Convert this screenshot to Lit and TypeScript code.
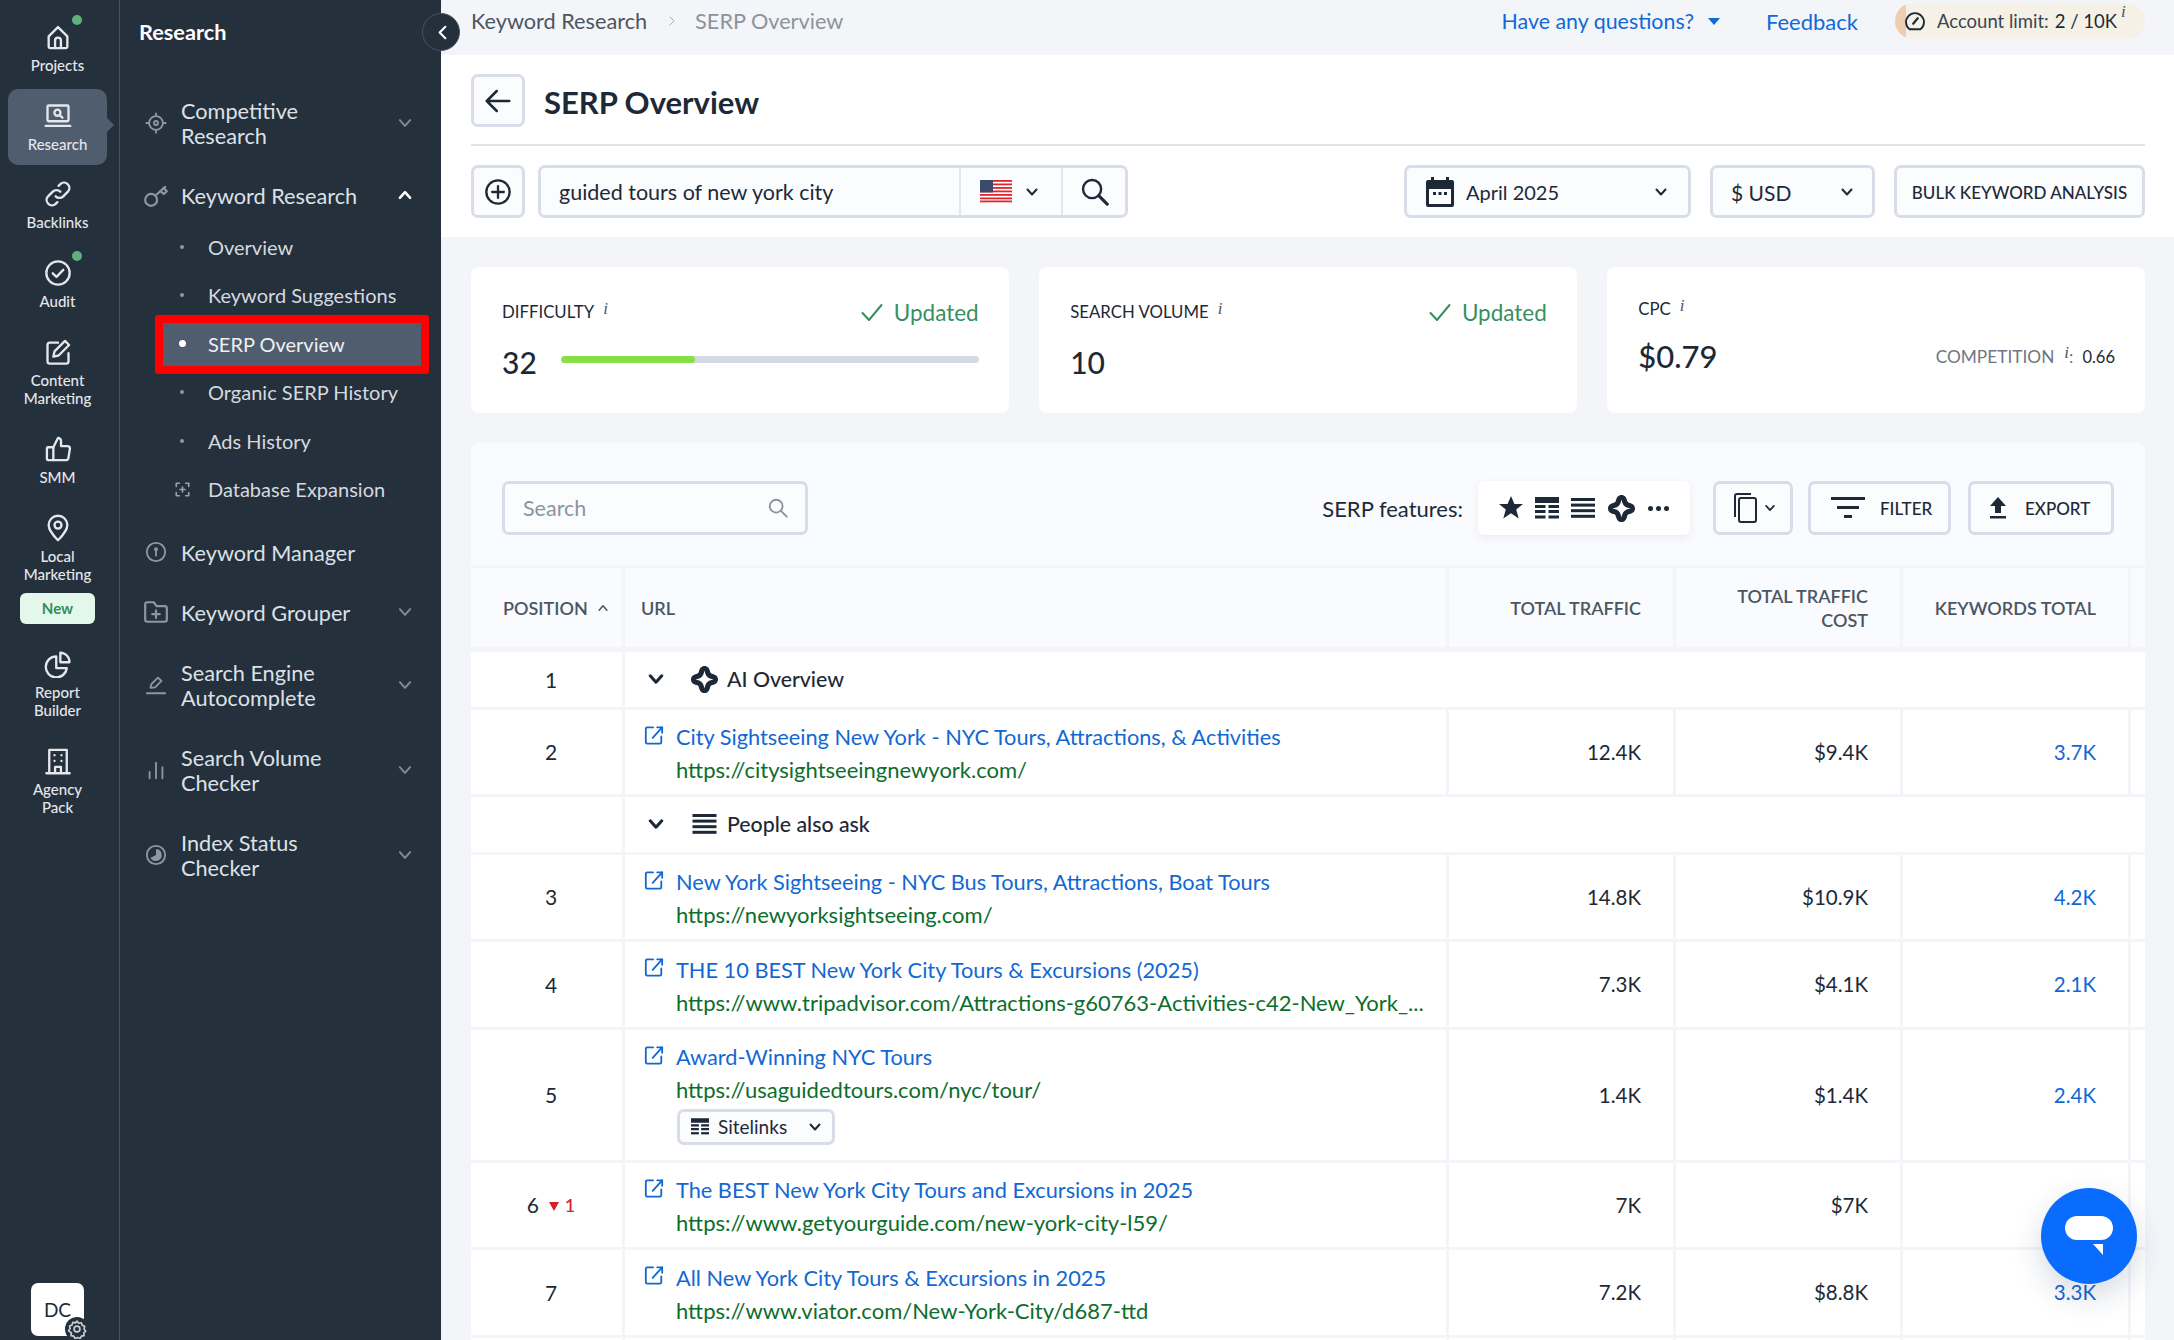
import { LitElement, html, css, svg } from "lit";
import { customElement } from "lit/decorators.js";

const ic = (w: number, h: number, body: unknown, vb = "0 0 24 24", cls = "") =>
  html`<svg class=${cls} width=${w} height=${h} viewBox=${vb} fill="none" stroke="currentColor" stroke-width="2" stroke-linecap="round" stroke-linejoin="round">${body}</svg>`;

const chevD = (w = 14, h = 14, sw = 2.4) =>
  html`<svg width=${w} height=${h} viewBox="0 0 14 14" fill="none" stroke="currentColor" stroke-width=${sw} stroke-linecap="round" stroke-linejoin="round"><path d="M2.5 4.5 7 9.5l4.5-5"/></svg>`;
const chevU = (w = 14, h = 14, sw = 2.4) =>
  html`<svg width=${w} height=${h} viewBox="0 0 14 14" fill="none" stroke="currentColor" stroke-width=${sw} stroke-linecap="round" stroke-linejoin="round"><path d="M2.5 9.5 7 4.5l4.5 5"/></svg>`;

const aiIcon = (s = 29) =>
  html`<svg width=${s} height=${s} viewBox="0 0 24 24"><path fill="#1d2936" d="M12 .8C14.6 .8 16 2.800 16.600 5.200 17 6.800 17.200 7 18.800 7.400 21.200 8 23.200 9.400 23.200 12 23.200 14.600 21.200 16 18.800 16.600 17.200 17 17 17.200 16.600 18.800 16 21.200 14.600 23.200 12 23.200 9.400 23.200 8 21.200 7.400 18.800 7 17.200 6.800 17 5.200 16.600 2.800 16 .8 14.600 .8 12 .8 9.400 2.800 8 5.200 7.400 6.800 7 7 6.800 7.400 5.200 8 2.800 9.400 .8 12 .8Z"/><path fill="#fff" d="M12 4.500C13 9.500 14.500 11 19.500 12 14.500 13 13 14.500 12 19.500 11 14.500 9.500 13 4.500 12 9.500 11 11 9.500 12 4.500Z"/></svg>`;
const linesIcon = (w = 25, h = 20) =>
  html`<svg width=${w} height=${h} viewBox="0 0 24 20" fill="#1d2936"><rect y="0" width="24" height="3"/><rect y="5.6" width="24" height="3"/><rect y="11.2" width="24" height="3"/><rect y="16.8" width="24" height="3"/></svg>`;
const siteIcon = (w = 24, h = 22) =>
  html`<svg width=${w} height=${h} viewBox="0 0 24 22" fill="#1d2936"><rect width="24" height="6"/><rect y="8" width="10.5" height="3"/><rect x="13.5" y="8" width="10.5" height="3"/><rect y="13" width="10.5" height="3"/><rect x="13.5" y="13" width="10.5" height="3"/><rect y="18.5" width="10.5" height="3"/><rect x="13.5" y="18.5" width="10.5" height="3"/></svg>`;
const extIcon = () =>
  ic(20, 23, svg`<path d="M10 3H3.5A1.5 1.5 0 0 0 2 4.5v15A1.5 1.5 0 0 0 3.5 21h14a1.5 1.5 0 0 0 1.5-1.5V13"/><path d="M9.5 14.5 20 3"/><path d="M14.5 3H20v6"/>`, "0 0 22 24", "ext");
const checkIcon = () =>
  ic(22, 19, svg`<path d="M1.5 10 8 17 20.5 2"/>`, "0 0 22 19");

const railIcons: Record<string, unknown> = {
  home: svg`<path d="M4 11.5 12 3.5l8 8V20a1.5 1.5 0 0 1-1.5 1.5h-13A1.5 1.5 0 0 1 4 20z"/><path d="M9.5 21.5V15a2.5 2.5 0 0 1 5 0v6.5"/>`,
  laptop: svg`<rect x="3" y="3" width="18" height="13.5" rx="1"/><circle cx="11.5" cy="9.2" r="2.6"/><path d="m13.5 11.2 2.3 2.3"/><path d="M1.5 20.5h21"/>`,
  link: svg`<path d="M10 14a4.5 4.5 0 0 0 6.5 0l4-4A4.6 4.6 0 0 0 14 3.5l-1.5 1.5"/><path d="M14 10a4.5 4.5 0 0 0-6.5 0l-4 4A4.6 4.6 0 0 0 10 20.5l1.5-1.5"/>`,
  check: svg`<circle cx="12" cy="12" r="10"/><path d="m7.5 12.3 3.2 3 5.8-6"/>`,
  edit: svg`<path d="M12 4H5a2 2 0 0 0-2 2v14a2 2 0 0 0 2 2h14a2 2 0 0 0 2-2v-7"/><path d="m8 16 1-4.5L18 2.5l3.5 3.5-9 9z"/>`,
  thumb: svg`<path d="M8 10.5 12 2.5a2.6 2.6 0 0 1 2.6 2.6V9.5h5.6a2 2 0 0 1 2 2.3l-1.3 8a2 2 0 0 1-2 1.7H8z"/><path d="M8 10.5H3.5a1 1 0 0 0-1 1v9a1 1 0 0 0 1 1H8"/>`,
  pin: svg`<path d="M12 22.5S4 14.8 4 9.5a8 8 0 0 1 16 0c0 5.3-8 13-8 13z"/><circle cx="12" cy="9.5" r="3"/>`,
  pie: svg`<path d="M10.5 5.5a9 9 0 1 0 9 10h-9z"/><path d="M14 2.2a8 8 0 0 1 7.8 8.3H14z"/>`,
  building: svg`<path d="M4.5 22V2.5h15V22"/><path d="M2 22.5h20"/><path d="M9.5 22v-5h5v5"/><path d="M9 7h.01M15 7h.01M9 12h.01M15 12h.01"/>`,
};

const panelIcons: Record<string, unknown> = {
  target: svg`<circle cx="12" cy="12" r="7.5"/><circle cx="12" cy="12" r="2.2"/><path d="M12 1.5v3M12 19.5v3M1.5 12h3M19.5 12h3"/>`,
  key: svg`<circle cx="7.5" cy="16.5" r="5.5"/><path d="m11.5 12.5 9-8"/><path d="m16 8.5 3.2 2.6 2.8-2.6L19 5.5"/>`,
  manager: svg`<circle cx="12" cy="12" r="10"/><circle cx="12" cy="9" r="1.2"/><path d="M12 10v6"/>`,
  folder: svg`<path d="M2 5a2 2 0 0 1 2-2h6l2.5 3.5H20a2 2 0 0 1 2 2V19a2 2 0 0 1-2 2H4a2 2 0 0 1-2-2z"/><path d="M12 10.5v7M8.5 14h7"/>`,
  pen: svg`<path d="m6 15 1-4 7-7 4 3.6-7 7z"/><path d="M2 21h20"/>`,
  bars: svg`<path d="M5 21v-7M12 21V4M19 21V9"/>`,
  clock: svg`<circle cx="12" cy="12" r="10"/><path d="M12 5.5a6.5 6.5 0 1 1-6 9.5l6-3z" fill="currentColor" stroke="none"/>`,
};

const railItems = [
  { icon: "home", label: ["Projects"], dot: true },
  { icon: "laptop", label: ["Research"], active: true },
  { icon: "link", label: ["Backlinks"] },
  { icon: "check", label: ["Audit"], dot: true, extra: true },
  { icon: "edit", label: ["Content", "Marketing"] },
  { icon: "thumb", label: ["SMM"] },
  { icon: "pin", label: ["Local", "Marketing"], badge: "New" },
  { icon: "pie", label: ["Report", "Builder"] },
  { icon: "building", label: ["Agency", "Pack"] },
];

const rows = [
  { kind: "group", pos: "1", icon: "ai", label: "AI Overview" },
  { kind: "link", pos: "2", title: "City Sightseeing New York - NYC Tours, Attractions, & Activities", url: "https://citysightseeingnewyork.com/", t: "12.4K", c: "$9.4K", k: "3.7K" },
  { kind: "group", pos: "", icon: "lines", label: "People also ask" },
  { kind: "link", pos: "3", title: "New York Sightseeing - NYC Bus Tours, Attractions, Boat Tours", url: "https://newyorksightseeing.com/", t: "14.8K", c: "$10.9K", k: "4.2K" },
  { kind: "link", pos: "4", title: "THE 10 BEST New York City Tours & Excursions (2025)", url: "https://www.tripadvisor.com/Attractions-g60763-Activities-c42-New_York_...", t: "7.3K", c: "$4.1K", k: "2.1K" },
  { kind: "link", pos: "5", title: "Award-Winning NYC Tours", url: "https://usaguidedtours.com/nyc/tour/", t: "1.4K", c: "$1.4K", k: "2.4K", sitelinks: true },
  { kind: "link", pos: "6", delta: "1", title: "The BEST New York City Tours and Excursions in 2025", url: "https://www.getyourguide.com/new-york-city-l59/", t: "7K", c: "$7K", k: "" },
  { kind: "link", pos: "7", title: "All New York City Tours & Excursions in 2025", url: "https://www.viator.com/New-York-City/d687-ttd", t: "7.2K", c: "$8.8K", k: "3.3K" },
];

@customElement("app-root")
export class AppRoot extends LitElement {
  static styles = css`
    :host { display: block; width: 2174px; height: 1340px; overflow: hidden; position: relative;
      font-family: "Lato", "Noto Sans", sans-serif; color: #1d2936; background: #f4f5f9; }
    * { box-sizing: border-box; }
    .app { display: flex; height: 1340px; }
    .rail { width: 120px; flex: none; background: #25303d; border-right: 1px solid #47525f; padding: 10px 8px 4px 8px; display: flex; flex-direction: column; gap: 2.5px; color: #e4e7eb; }
    .ri { position: relative; width: 99px; height: 76px; padding-top: 13px; border-radius: 10px; display: flex; flex-direction: column; align-items: center; font-size: 15px; line-height: 18px; font-weight: 500; flex: none; }
    .ri.extra { height: 77px; }
    .ri.tall { height: 94.5px; }
    .ri.badged { height: 134px; }
    .ri svg { display: block; margin-bottom: 5px; flex: none; }
    .ri.on { background: #4f5d6e; }
    .ri.on::after { content: ""; position: absolute; right: -7px; top: 29px; width: 0; height: 0; border-left: 7px solid #4f5d6e; border-top: 7px solid transparent; border-bottom: 7px solid transparent; }
    .rdot { position: absolute; left: 64px; top: 5px; width: 10px; height: 10px; border-radius: 50%; background: #5fb17c; }
    .rl { text-align: center; white-space: nowrap; }
    .rbadge { margin-top: 10px; width: 75px; height: 31px; border-radius: 6px; background: #e3f8eb; color: #2f8f5b; font-size: 15px; font-weight: 700; display: flex; align-items: center; justify-content: center; }
    .dc { margin: auto 0 0 23px; width: 53px; height: 53px; background: #fff; border-radius: 7px; color: #1d2936; font-size: 19px; display: flex; align-items: center; justify-content: center; position: relative; }
    .gear { position: absolute; right: -5px; bottom: -5px; width: 24px; height: 24px; border-radius: 50%; background: #25303d; color: #c9ced5; display: flex; align-items: center; justify-content: center; }

    .panel { width: 321px; flex: none; background: #25303d; position: relative; color: #dde1e6; padding: 20px 29px 0 21px; font-size: 21.7px; }
    .ptitle { font-size: 21.7px; line-height: 24px; font-weight: 700; color: #fff; margin: 0 0 37px -2px; }
    .collapse { position: absolute; right: -19px; top: 13px; width: 38px; height: 38px; border-radius: 50%; background: #25303d; border: 1px solid #46525f; color: #fff; display: flex; align-items: center; justify-content: center; z-index: 2; padding: 0 0 0 2px; }
    .pi { display: flex; align-items: center; height: 60px; line-height: 24.2px; }
    .pi.two { height: 85px; }
    .pi .pic { width: 30px; height: 30px; flex: none; color: #8d96a2; display: flex; align-items: center; justify-content: center; margin-right: 10px; margin-top: -2px; }
    .pi .pch { margin-left: auto; width: 16px; color: #7f8996; display: flex; align-items: center; justify-content: center; position: relative; left: 1px; top: -1px; }
    .pi .pch.up { color: #fff; }
    .subs { margin: -1px -9px 0 22px; padding-bottom: 7px; }
    .si { height: 43px; margin-bottom: 5.5px; display: flex; align-items: center; position: relative; font-size: 20px; color: #d5d9df; }
    .si .m { width: 38px; margin-right: 7px; flex: none; display: flex; justify-content: center; align-items: center; color: #9aa2ad; }
    .si .d { width: 4px; height: 4px; border-radius: 50%; background: #8e97a2; }
    .si.on { background: #4f5d6e; color: #eef0f3; top: 1px; padding-bottom: 2px; }
    .si.on .d { width: 7px; height: 7px; background: #fff; }
    .si.on::after { content: ""; position: absolute; inset: -8px; border: 8px solid #f00; border-radius: 3px; }

    .main { flex: 1; min-width: 0; }
    .top { height: 55px; display: flex; align-items: center; padding: 0 29px 13px 30px; font-size: 21.7px; }
    .crumb { color: #4b5663; }
    .sep { margin: 0 17px 0 19px; color: #a4acb7; display: flex; }
    .crumb2 { color: #8a94a0; }
    .tright { margin-left: auto; display: flex; align-items: center; color: #0f6ad6; font-size: 21.4px; }
    .tri { width: 0; height: 0; border-left: 6px solid transparent; border-right: 6px solid transparent; border-top: 7px solid #0f6ad6; margin: 0 46px 0 14px; }
    .fb { font-size: 22px; }
    .limit { margin-left: 37px; width: 250px; height: 36px; border-radius: 18px; background: linear-gradient(90deg, #efcdb0 0 11px, #f5f1e6 11px); display: flex; align-items: center; padding-left: 9px; font-size: 18.5px; color: #1d2936; }
    .limit svg { margin: 0 11px 0 0; }
    .limit .g { color: #3a4552; margin-right: 6px; }
    .i { font-family: "Liberation Serif", serif; font-style: italic; color: #4b5663; font-weight: 400; }
    .limit .i { font-size: 17px; margin-left: 4px; position: relative; top: -9px; }

    .white { background: #fff; height: 182px; padding: 19px 29px 0 30px; }
    .trow { display: flex; align-items: center; height: 53px; }
    .box { border: 3px solid #d8dde9; border-radius: 7px; background: #fbfcfe; display: flex; align-items: center; flex: none; }
    .sq { width: 54px; height: 53px; justify-content: center; color: #1d2936; }
    h1 { margin: 0 0 0 19px; padding-top: 3px; font-size: 31px; font-weight: 700; color: #1d2936; line-height: 53px; }
    .div { height: 2px; background: #e0e3ec; margin: 17px 0 19px; }
    .qbox { margin-left: 13px; width: 590px; height: 53px; }
    .qtext { width: 418px; padding-left: 18px; font-size: 21.5px; height: 100%; display: flex; align-items: center; padding-top: 1px; }
    .qflag { width: 102px; height: 100%; border-left: 2px solid #e3e6ef; display: flex; align-items: center; padding-left: 19px; gap: 13px; }
    .qs { flex: 1; height: 100%; border-left: 2px solid #e3e6ef; display: flex; align-items: center; justify-content: center; }
    .dd { height: 53px; padding: 0 18px; font-size: 21px; }
    .dd.a { margin-left: auto; width: 287px; padding: 1px 8px 0 19px; font-size: 20px; }
    .dd.a svg:first-child { margin-right: 12px; }
    .dd.u { margin-left: 19px; width: 165px; padding-top: 1px; }
    .dd .ch { margin-left: auto; display: flex; }
    .dd.b { margin-left: 19px; width: 251px; justify-content: center; padding: 1px 0 0; font-size: 17px; font-weight: 500; }

    .cards { display: grid; grid-template-columns: repeat(3, 1fr); gap: 30.5px; margin: 30px 29px 30px 30px; }
    .card { background: #fff; border-radius: 8px; height: 146px; padding: 29px 30px 0 31px; position: relative; }
    .ch1 { display: flex; align-items: center; height: 32px; justify-content: space-between; }
    .ch1.c { margin-top: -3px; }
    .lbl { font-size: 16.8px; font-weight: 400; color: #1d2936; }
    .lbl .i, .cmp .i { font-size: 17px; margin-left: 9px; position: relative; top: -4px; }
    .upd { color: #37905f; font-size: 22.5px; display: flex; align-items: center; gap: 11px; }
    .ch2 { display: flex; align-items: center; margin-top: 14px; height: 40px; font-size: 30px; font-weight: 500; }
    .bar { flex: 1; height: 7px; background: #d5d9e6; border-radius: 4px; margin-left: 24px; margin-top: -6px; overflow: hidden; }
    .bar div { height: 100%; width: 32%; background: #85e045; border-radius: 4px; }
    .ch3 { display: flex; align-items: center; height: 40px; font-size: 31px; font-weight: 500; margin-top: 10.5px; }
    .cmp { margin-left: auto; font-size: 17.3px; font-weight: 400; color: #6d7783; display: flex; align-items: center; position: relative; top: 1px; }
    .cmp .i { margin-left: 10px; }
    .cmp b { font-weight: 400; color: #1d2936; font-size: 16.5px; margin-left: 9px; }

    .tbl { margin: 0 29px 0 30px; display: flex; flex-direction: column; gap: 3px; }
    .bar0 { background: #fafbfe; border-radius: 8px 8px 0 0; height: 122px; padding: 38px 31px 0 31px; display: flex; align-items: flex-start; }
    .sbox { width: 306px; height: 54px; padding: 0 16px 0 18px; color: #8a94a0; font-size: 21.5px; justify-content: space-between; }
    .feat { margin-left: auto; height: 54px; display: flex; align-items: center; font-size: 22px; }
    .pill { margin-left: 15px; width: 212px; height: 54px; background: #fff; border-radius: 7px; box-shadow: 0 3px 8px rgba(40,50,80,.07); display: flex; align-items: center; padding-left: 21px; }
    .pill > * { flex: none; }
    .pill .p { margin-right: 12px; display: flex; }
    .pill .ai { display: flex; }
    .dots { display: flex; gap: 3px; margin-left: 12px; }
    .dots i { width: 5px; height: 5px; border-radius: 50%; background: #1d2936; }
    .t { height: 54px; font-size: 17px; font-weight: 500; }
    .t.dev { margin-left: 23px; width: 80px; padding-left: 16px; gap: 6px; }
    .t.fil { margin-left: 15px; width: 143px; padding-left: 20px; gap: 15px; }
    .t.exp { margin-left: 17px; width: 146px; padding-left: 18px; gap: 18px; }

    .tr { display: grid; grid-template-columns: 151px 821px 224px 224px 225px 14px; gap: 3px; }
    .tr > div { background: #fff; display: flex; align-items: center; }
    .thd { height: 79px; margin-bottom: 2px; }
    .thd > div { background: #fafbfe !important; font-size: 18px; font-weight: 600; color: #4b5663; }
    .thd .r { justify-content: flex-end; text-align: right; padding-right: 32px; line-height: 24px; }
    .thd .c1 { padding-left: 32px; gap: 9px; }
    .thd .c2 { padding-left: 16px; }
    .group { height: 54.5px; }
    .group .span { grid-column: 2 / -1; padding-left: 22px; font-size: 21.3px; font-weight: 500; }
    .group .mk { display: flex; color: #1d2936; margin-right: 25px; }
    .group .lb { margin-left: 8px; }
    .group .icb { width: 29px; display: flex; justify-content: center; }
    .tr .pos { justify-content: center; padding-left: 9px; font-size: 21px; }
    .delta { color: #d4202b; font-size: 18px; display: flex; align-items: center; margin-left: 10px; gap: 6px; font-weight: 500; }
    .delta i { width: 0; height: 0; border-left: 5px solid transparent; border-right: 5px solid transparent; border-top: 9px solid #d4202b; position: relative; top: 2px; }
    .link { height: 84.5px; }
    .link.tall { height: 130px; }
    .urlc { flex-direction: column; align-items: flex-start !important; padding: 11px 20px 0 20px; position: relative; min-width: 0; }
    .urlc .a { color: #1268d3; font-size: 21.75px; line-height: 34px; margin-left: 31px; white-space: nowrap; margin-top: -0.5px; }
    .urlc .g { color: #0c6d2c; font-size: 22px; line-height: 34px; margin: -1px 0 1.5px 31px; white-space: nowrap; }
    .ext { position: absolute; left: 19px; top: 14px; color: #1268d3; }
    .sl { margin-left: 32px; width: 158px; height: 36px; font-size: 19px; padding-left: 11px; border-radius: 7px; gap: 9px; }
    .sl .ch { margin-left: 12px; display: flex; }
    .num { justify-content: flex-end; padding-right: 32px; font-size: 20.5px; }
    .num.k { color: #1268d3; }
    .last { height: 10px; }

    .chat { position: absolute; left: 2041px; top: 1188px; width: 96px; height: 96px; border-radius: 50%; background: #0a6cff; box-shadow: 0 12px 30px rgba(30,50,90,.18); z-index: 5; display: flex; align-items: center; justify-content: center; }
  `;

  renderRail() {
    return html`<nav class="rail">
      ${railItems.map((r: any) => html`<div class="ri ${r.active ? "on" : ""} ${r.extra ? "extra" : ""} ${r.label.length > 1 ? "tall" : ""} ${r.badge ? "badged" : ""}">
        ${ic(28, 28, railIcons[r.icon])}
        ${r.dot ? html`<span class="rdot"></span>` : ""}
        <div class="rl">${r.label.map((l: string) => html`<div>${l}</div>`)}</div>
        ${r.badge ? html`<div class="rbadge">${r.badge}</div>` : ""}
      </div>`)}
      <div class="dc">DC<span class="gear">${ic(20, 20, svg`<circle cx="12" cy="12" r="3.5"/><path d="M12 2.5l2 2.6 3.2-.6 1 3.1 3 1.2-.8 3.2 2 2.5-2.3 2.3.4 3.2-3.2.6-1.6 2.8-3-1.2-3 1.2-1.6-2.8-3.2-.6.4-3.2L1.800 14l2-2.500-.8-3.200 3-1.200 1-3.100 3.200.6z"/>`)}</span></div>
    </nav>`;
  }

  renderItem(icon: string, lines: string[], chev: "" | "d" | "u" = "d") {
    const big = icon === "key" || icon === "folder";
    return html`<div class="pi ${lines.length > 1 ? "two" : ""}">
      <span class="pic">${ic(big ? 26 : 22, big ? 26 : 22, panelIcons[icon])}</span>
      <div>${lines.map((l) => html`<div>${l}</div>`)}</div>
      ${chev ? html`<span class="pch ${chev === "u" ? "up" : ""}">${chev === "u" ? chevU(16, 16, 2.2) : chevD(16, 16, 1.8)}</span>` : ""}
    </div>`;
  }

  renderPanel() {
    const subs = ["Overview", "Keyword Suggestions", "SERP Overview", "Organic SERP History", "Ads History"];
    return html`<aside class="panel">
      <div class="ptitle">Research</div>
      <button class="collapse" aria-label="collapse">${ic(17, 17, svg`<path d="M16 4 8 12l8 8" stroke-width="3"/>`, "0 0 24 24")}</button>
      ${this.renderItem("target", ["Competitive", "Research"])}
      ${this.renderItem("key", ["Keyword Research"], "u")}
      <div class="subs">
        ${subs.map((s) => html`<div class="si ${s === "SERP Overview" ? "on" : ""}"><span class="m"><span class="d"></span></span>${s}</div>`)}
        <div class="si"><span class="m">${ic(15, 15, svg`<path d="M2 7V2h5M17 2h5v5M22 17v5h-5M7 22H2v-5M12 8v8M8 12h8" stroke-width="2.600"/>`)}</span>Database Expansion</div>
      </div>
      ${this.renderItem("manager", ["Keyword Manager"], "")}
      ${this.renderItem("folder", ["Keyword Grouper"])}
      ${this.renderItem("pen", ["Search Engine", "Autocomplete"])}
      ${this.renderItem("bars", ["Search Volume", "Checker"])}
      ${this.renderItem("clock", ["Index Status", "Checker"])}
    </aside>`;
  }

  renderTop() {
    return html`<header class="top">
      <span class="crumb">Keyword Research</span>
      <span class="sep">${ic(12, 14, svg`<path d="m8 4 8 8-8 8"/>`)}</span>
      <span class="crumb2">SERP Overview</span>
      <div class="tright">
        <span>Have any questions?</span><span class="tri"></span><span class="fb">Feedback</span>
        <div class="limit">
          ${ic(22, 22, svg`<path d="M6 21a9.800 9.800 0 1 1 12 0z"/><path d="m10 15 5-6" stroke-width="2.400"/>`)}
          <span class="g">Account limit:</span><span>2 / 10K</span><span class="i">i</span>
        </div>
      </div>
    </header>`;
  }

  renderWhite() {
    return html`<section class="white">
      <div class="trow">
        <div class="box sq">${ic(30, 30, svg`<path d="M21 12H4M11 4l-8 8 8 8"/>`)}</div>
        <h1>SERP Overview</h1>
      </div>
      <div class="div"></div>
      <div class="trow">
        <div class="box sq">${ic(28, 28, svg`<circle cx="12" cy="12" r="10"/><path d="M12 7v10M7 12h10"/>`)}</div>
        <div class="box qbox">
          <div class="qtext">guided tours of new york city</div>
          <div class="qflag">
            <svg width="32" height="23" viewBox="0 0 32 23">
              <rect width="32" height="23" fill="#fff"/>
              ${[0, 3.5, 7, 10.5, 14, 17.5, 20.5].map((y) => svg`<rect y=${y} width="32" height="1.800" fill="#e0252f"/>`)}
              <rect width="13" height="12.500" fill="#3c4a6b"/>
            </svg>
            ${chevD(14, 14, 2)}
          </div>
          <div class="qs">${ic(29, 29, svg`<circle cx="10" cy="10" r="7.500"/><path d="m15.500 15.500 7 7" stroke-width="2.600"/>`)}</div>
        </div>
        <div class="box dd a">
          <svg width="28" height="30" viewBox="0 0 28 30" fill="#1d2936"><path d="M5 0h3v3h12V0h3v3h3a2 2 0 0 1 2 2v23a2 2 0 0 1-2 2H2a2 2 0 0 1-2-2V5a2 2 0 0 1 2-2h3zM3 12v15h22V12z"/><rect x="7" y="15" width="3" height="3"/><rect x="12.500" y="15" width="3" height="3"/><rect x="18" y="15" width="3" height="3"/></svg>
          April 2025<span class="ch">${chevD(14, 14, 2)}</span>
        </div>
        <div class="box dd u">$ USD<span class="ch">${chevD(14, 14, 2)}</span></div>
        <div class="box dd b">BULK KEYWORD ANALYSIS</div>
      </div>
    </section>`;
  }

  renderCards() {
    const hd = (l: string) => html`<div class="ch1"><span class="lbl">${l}<span class="i">i</span></span><span class="upd">${checkIcon()}Updated</span></div>`;
    return html`<section class="cards">
      <div class="card">${hd("DIFFICULTY")}<div class="ch2">32<div class="bar"><div></div></div></div></div>
      <div class="card">${hd("SEARCH VOLUME")}<div class="ch2">10</div></div>
      <div class="card">
        <div class="ch1 c"><span class="lbl">CPC<span class="i">i</span></span></div>
        <div class="ch3">$0.79<span class="cmp">COMPETITION<span class="i">i</span>:<b>0.66</b></span></div>
      </div>
    </section>`;
  }

  renderRow(r: any) {
    if (r.kind === "group") {
      return html`<div class="tr group">
        <div class="pos">${r.pos}</div>
        <div class="span"><span class="mk">${chevD(18, 18, 2.4)}</span><span class="icb">${r.icon === "ai" ? aiIcon(29) : linesIcon(25, 20)}</span><span class="lb">${r.label}</span></div>
      </div>`;
    }
    return html`<div class="tr link ${r.sitelinks ? "tall" : ""}">
      <div class="pos">${r.pos}${r.delta ? html`<span class="delta"><i></i>${r.delta}</span>` : ""}</div>
      <div class="urlc">
        ${extIcon()}
        <span class="a">${r.title}</span>
        <span class="g">${r.url}</span>
        ${r.sitelinks ? html`<div class="box sl">${siteIcon(18, 17)}Sitelinks<span class="ch">${chevD(14, 14, 2)}</span></div>` : ""}
      </div>
      <div class="num">${r.t}</div>
      <div class="num">${r.c}</div>
      <div class="num k">${r.k}</div>
      <div></div>
    </div>`;
  }

  renderTable() {
    return html`<section class="tbl">
      <div class="bar0">
        <div class="box sbox">Search ${ic(22, 22, svg`<circle cx="10" cy="10" r="7"/><path d="m15.500 15.500 6 6"/>`, "0 0 24 24")}</div>
        <div class="feat">SERP features:
          <div class="pill">
            <svg class="p" width="24" height="24" viewBox="0 0 24 24" fill="#1d2936"><path d="M12 0l3.400 8h8.600l-6.800 5.400 2.500 9.100L12 17.300 4.300 22.500l2.500-9.100L0 8h8.600z"/></svg>
            <span class="p">${siteIcon(24, 22)}</span>
            <span class="p">${linesIcon(24, 20)}</span>
            <span class="ai">${aiIcon(29)}</span>
            <span class="dots"><i></i><i></i><i></i></span>
          </div>
        </div>
        <div class="box t dev">
          <svg width="26" height="30" viewBox="0 0 26 30" fill="none" stroke="#1d2936" stroke-width="2"><rect x="7" y="5" width="17" height="24" rx="2"/><path d="M3 24V3a2 2 0 0 1 2-2h14"/></svg>
          ${chevD(12, 12, 2)}
        </div>
        <div class="box t fil">
          <svg width="34" height="22" viewBox="0 0 34 22" fill="#1d2936"><rect width="34" height="3"/><rect x="6" y="9" width="22" height="3"/><rect x="13" y="18" width="8" height="3"/></svg>
          FILTER
        </div>
        <div class="box t exp">
          <svg width="18" height="22" viewBox="0 0 18 22" fill="#1d2936"><path d="M9 0 17 9H12V16H6V9H1z"/><rect x="1" y="19" width="16" height="2.500"/></svg>
          EXPORT
        </div>
      </div>
      <div class="tr thd">
        <div class="c1">POSITION ${chevU(12, 12, 1.8)}</div>
        <div class="c2">URL</div>
        <div class="r">TOTAL TRAFFIC</div>
        <div class="r">TOTAL TRAFFIC<br />COST</div>
        <div class="r">KEYWORDS TOTAL</div>
        <div></div>
      </div>
      ${rows.map((r) => this.renderRow(r))}
      <div class="tr last"><div></div><div></div><div></div><div></div><div></div><div></div></div>
    </section>`;
  }

  render() {
    return html`<div class="app">
      ${this.renderRail()}
      ${this.renderPanel()}
      <main class="main">
        ${this.renderTop()}
        ${this.renderWhite()}
        ${this.renderCards()}
        ${this.renderTable()}
      </main>
    </div>
    <div class="chat">
      <svg width="48" height="40" viewBox="0 0 48 40" fill="#fff"><rect width="48" height="24" rx="12"/><path d="M28 28h10v11z"/></svg>
    </div>`;
  }
}
